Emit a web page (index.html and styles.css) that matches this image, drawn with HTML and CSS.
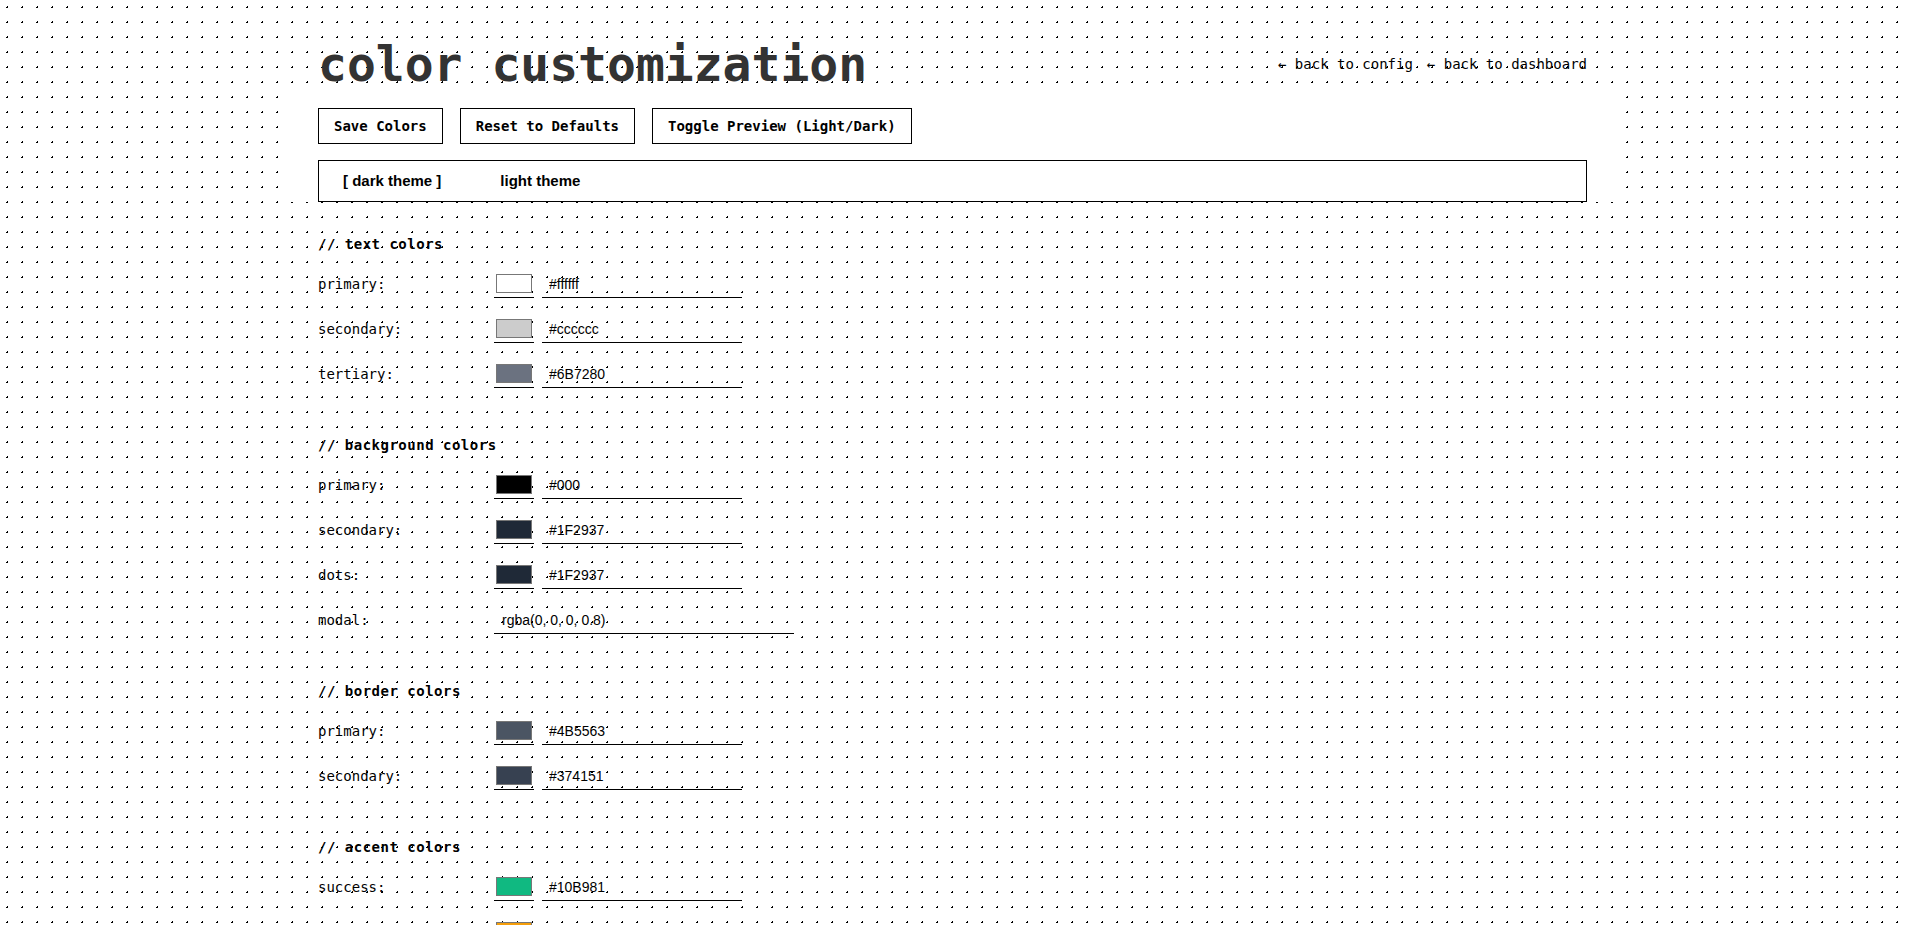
FILE: index.html
```html
<!DOCTYPE html>
<html lang="en">
<head>
<meta charset="utf-8">
<title>color customization</title>
<link rel="stylesheet" href="styles.css">
</head>
<body class="page-body">
<div class="page">
  <header class="page-header">
    <h1 class="title">color customization</h1>
    <nav class="back-links">
      <a class="back-link" href="#">← back to config</a>
      <a class="back-link" href="#">← back to dashboard</a>
    </nav>
  </header>

  <div class="toolbar">
    <div class="actions">
      <button class="btn" type="button">Save Colors</button>
      <button class="btn" type="button">Reset to Defaults</button>
      <button class="btn" type="button">Toggle Preview (Light/Dark)</button>
    </div>
    <div class="tabs">
      <button class="tab tab-active" type="button">[ dark theme ]</button>
      <button class="tab" type="button">light theme</button>
    </div>
  </div>

  <section class="group">
    <h2 class="group-title">// text colors</h2>
    <div class="rows">
      <div class="row"><label class="row-label">primary:</label><div class="field"><input class="swatch" type="color" value="#ffffff"><input class="hex" type="text" value="#ffffff"></div></div>
      <div class="row"><label class="row-label">secondary:</label><div class="field"><input class="swatch" type="color" value="#cccccc"><input class="hex" type="text" value="#cccccc"></div></div>
      <div class="row"><label class="row-label">tertiary:</label><div class="field"><input class="swatch" type="color" value="#6b7280"><input class="hex" type="text" value="#6B7280"></div></div>
    </div>
  </section>

  <section class="group">
    <h2 class="group-title">// background colors</h2>
    <div class="rows">
      <div class="row"><label class="row-label">primary:</label><div class="field"><input class="swatch" type="color" value="#000000"><input class="hex" type="text" value="#000"></div></div>
      <div class="row"><label class="row-label">secondary:</label><div class="field"><input class="swatch" type="color" value="#1f2937"><input class="hex" type="text" value="#1F2937"></div></div>
      <div class="row"><label class="row-label">dots:</label><div class="field"><input class="swatch" type="color" value="#1f2937"><input class="hex" type="text" value="#1F2937"></div></div>
      <div class="row"><label class="row-label">modal:</label><div class="field"><input class="hex hex-wide" type="text" value="rgba(0, 0, 0, 0.8)"></div></div>
    </div>
  </section>

  <section class="group">
    <h2 class="group-title">// border colors</h2>
    <div class="rows">
      <div class="row"><label class="row-label">primary:</label><div class="field"><input class="swatch" type="color" value="#4b5563"><input class="hex" type="text" value="#4B5563"></div></div>
      <div class="row"><label class="row-label">secondary:</label><div class="field"><input class="swatch" type="color" value="#374151"><input class="hex" type="text" value="#374151"></div></div>
    </div>
  </section>

  <section class="group">
    <h2 class="group-title">// accent colors</h2>
    <div class="rows">
      <div class="row"><label class="row-label">success:</label><div class="field"><input class="swatch" type="color" value="#10b981"><input class="hex" type="text" value="#10B981"></div></div>
      <div class="row"><label class="row-label">warning:</label><div class="field"><input class="swatch" type="color" value="#f59e0b"><input class="hex" type="text" value="#F59E0B"></div></div>
      <div class="row"><label class="row-label">error:</label><div class="field"><input class="swatch" type="color" value="#ef4444"><input class="hex" type="text" value="#EF4444"></div></div>
      <div class="row"><label class="row-label">info:</label><div class="field"><input class="swatch" type="color" value="#3b82f6"><input class="hex" type="text" value="#3B82F6"></div></div>
    </div>
  </section>
</div>
</body>
</html>
```

FILE: styles.css
```css
.page-body {
  margin: 0;
  background-color: #ffffff;
  background-image: radial-gradient(#000000 1px, transparent 1px);
  background-size: 15px 15px;
  color: #000000;
  font-family: "DejaVu Sans Mono", "Liberation Mono", monospace;
  font-size: 14px;
}

.page {
  max-width: 1269px;
  margin: 0 auto;
  padding: 40px 0 80px;
}

.page-header {
  display: flex;
  align-items: center;
  justify-content: space-between;
}

.title {
  margin: 0;
  font-size: 48px;
  line-height: 48px;
  font-weight: bold;
  color: #333333;
}

.back-links {
  display: flex;
  gap: 14px;
}

.back-link {
  color: #000000;
  text-decoration: none;
  font-size: 14px;
}

.toolbar {
  background: #ffffff;
  margin: 0 -37px;
  padding: 20px 37px 0;
}

.actions {
  display: flex;
  gap: 17px;
  margin-bottom: 16px;
}

.btn {
  font-family: "DejaVu Sans Mono", "Liberation Mono", monospace;
  font-size: 14px;
  line-height: 18px;
  font-weight: 600;
  padding: 8px 15px;
  background: #ffffff;
  color: #000000;
  border: 1px solid #000000;
  border-radius: 0;
}

.tabs {
  display: flex;
  gap: 27px;
  padding: 0 8px;
  border: 1px solid #000000;
  background: #ffffff;
}

.tab {
  font-family: "Liberation Sans", Arial, sans-serif;
  font-size: 15px;
  font-weight: bold;
  line-height: 18px;
  padding: 11px 16px;
  background: transparent;
  border: none;
  color: #000000;
}

.group {
  margin-top: 32px;
}

.group + .group {
  margin-top: 47px;
}

.group-title {
  margin: 0 0 16px;
  font-size: 14px;
  line-height: 20px;
  letter-spacing: 0.5px;
  font-weight: bold;
}

.rows {
  display: flex;
  flex-direction: column;
  gap: 17px;
}

.row {
  display: flex;
  align-items: center;
  gap: 16px;
}

.row-label {
  width: 160px;
  font-size: 14px;
}

.field {
  display: flex;
  align-items: center;
  gap: 8px;
}

.swatch {
  box-sizing: border-box;
  width: 40px;
  height: 28px;
  padding: 0;
  margin: 0;
  border: none;
  border-bottom: 1px solid #000000;
  background: transparent;
  cursor: pointer;
}

.swatch::-webkit-color-swatch-wrapper {
  padding: 4px 2px;
}

.swatch::-webkit-color-swatch {
  border: 1px solid #777777;
  border-radius: 0;
}

.hex {
  box-sizing: border-box;
  width: 200px;
  height: 28px;
  margin: 0;
  padding: 0 7px;
  border: none;
  border-bottom: 1px solid #000000;
  background: transparent;
  font-family: "Liberation Sans", Arial, sans-serif;
  font-size: 14px;
  color: #000000;
  outline: none;
}

.hex-wide {
  width: 300px;
  padding: 0 8px;
}
```
